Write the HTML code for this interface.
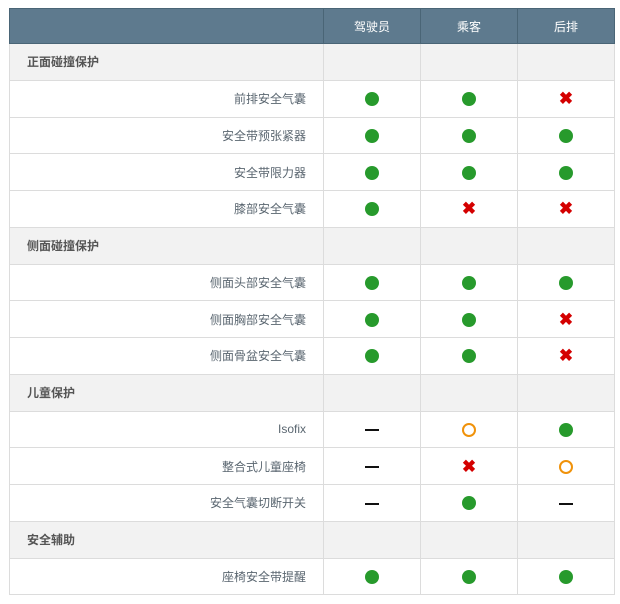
<!DOCTYPE html>
<html><head><meta charset="utf-8"><style>
body{margin:0;background:#fff;font-family:"Liberation Sans","Noto Sans CJK SC",sans-serif;}
table{position:absolute;left:9px;top:8px;border-collapse:collapse;width:605px;table-layout:fixed;}
td,th{border:1px solid #dcdcdc;height:36.75px;padding:0;font-size:12px;color:#5a6670;text-align:center;box-sizing:border-box;}
th{background:#5e7a8e;color:#fff;font-weight:normal;height:35px;border-color:#4a6576;}
td.l{text-align:right;padding-right:17px;}
tr.s td{background:#f2f2f2;}
tr.s td.h{text-align:left;padding-left:17px;font-weight:bold;color:#555;}
.g{display:inline-block;width:14px;height:14px;border-radius:50%;background:#279a2c;vertical-align:middle;}
.o{display:inline-block;width:10px;height:10px;border-radius:50%;border:2px solid #f0920a;vertical-align:middle;}
.x{color:#d40000;font-weight:bold;font-size:17px;line-height:1;vertical-align:middle;}
.d{display:inline-block;width:14px;height:2px;background:#111;vertical-align:middle;}
</style></head><body>
<table>
<colgroup><col style="width:314px"><col style="width:97px"><col style="width:97px"><col style="width:97px"></colgroup>
<tr><th></th><th>驾驶员</th><th>乘客</th><th>后排</th></tr>
<tr class="s"><td class="h">正面碰撞保护</td><td></td><td></td><td></td></tr>
<tr><td class="l">前排安全气囊</td><td><span class="g"></span></td><td><span class="g"></span></td><td><span class="x">✖</span></td></tr>
<tr><td class="l">安全带预张紧器</td><td><span class="g"></span></td><td><span class="g"></span></td><td><span class="g"></span></td></tr>
<tr><td class="l">安全带限力器</td><td><span class="g"></span></td><td><span class="g"></span></td><td><span class="g"></span></td></tr>
<tr><td class="l">膝部安全气囊</td><td><span class="g"></span></td><td><span class="x">✖</span></td><td><span class="x">✖</span></td></tr>
<tr class="s"><td class="h">侧面碰撞保护</td><td></td><td></td><td></td></tr>
<tr><td class="l">侧面头部安全气囊</td><td><span class="g"></span></td><td><span class="g"></span></td><td><span class="g"></span></td></tr>
<tr><td class="l">侧面胸部安全气囊</td><td><span class="g"></span></td><td><span class="g"></span></td><td><span class="x">✖</span></td></tr>
<tr><td class="l">侧面骨盆安全气囊</td><td><span class="g"></span></td><td><span class="g"></span></td><td><span class="x">✖</span></td></tr>
<tr class="s"><td class="h">儿童保护</td><td></td><td></td><td></td></tr>
<tr><td class="l">Isofix</td><td><span class="d"></span></td><td><span class="o"></span></td><td><span class="g"></span></td></tr>
<tr><td class="l">整合式儿童座椅</td><td><span class="d"></span></td><td><span class="x">✖</span></td><td><span class="o"></span></td></tr>
<tr><td class="l">安全气囊切断开关</td><td><span class="d"></span></td><td><span class="g"></span></td><td><span class="d"></span></td></tr>
<tr class="s"><td class="h">安全辅助</td><td></td><td></td><td></td></tr>
<tr><td class="l">座椅安全带提醒</td><td><span class="g"></span></td><td><span class="g"></span></td><td><span class="g"></span></td></tr>
</table>
</body></html>
